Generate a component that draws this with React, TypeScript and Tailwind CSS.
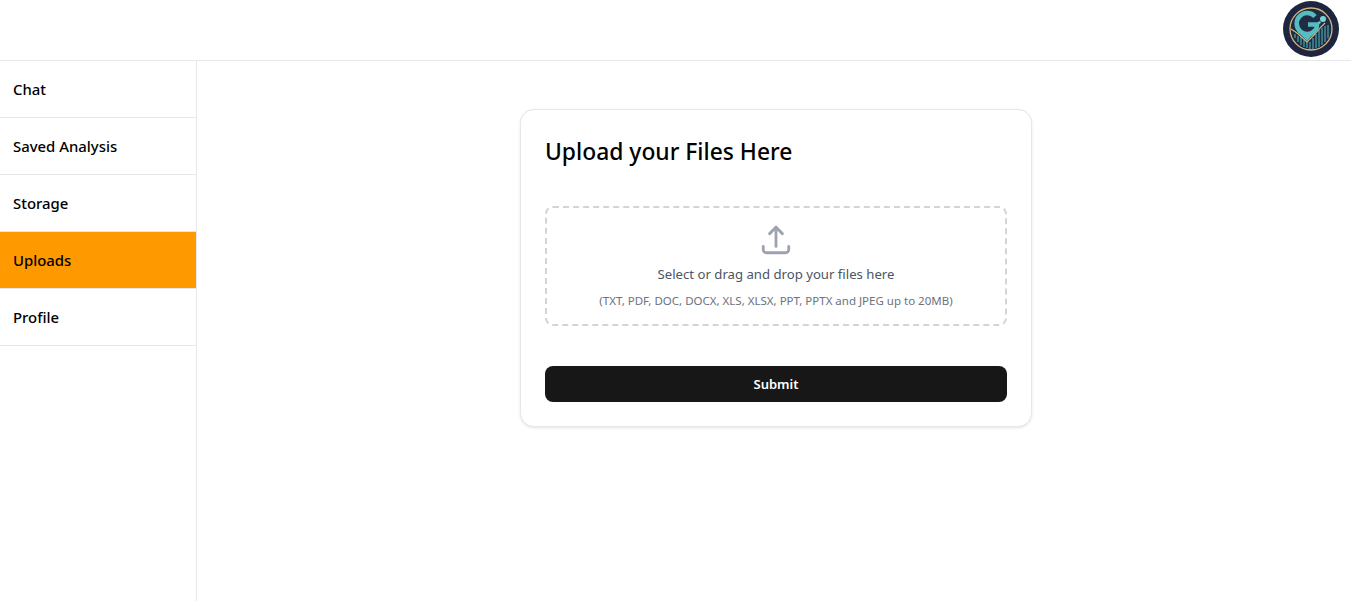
export default function App() {
  const items = ["Chat", "Saved Analysis", "Storage", "Uploads", "Profile"];
  return (
    <div className="h-[601px] bg-white flex flex-col overflow-hidden text-black font-['Noto_Sans',sans-serif]">
      <header className="h-[61px] shrink-0 border-b border-[#e5e7eb] flex items-center justify-end pr-3">
        <svg width="56" height="56" viewBox="0 0 56 56" className="mt-[-3px]">
          <circle cx="28" cy="28" r="28" fill="#1e2540" />
          <circle cx="28" cy="28" r="21" fill="#1f2c44" stroke="#d9b77c" strokeWidth="1.3" />
          <path d="M12 37 V33 M15 41 V35 M18 44 V36 M21 46 V39 M24 47 V41 M27 48 V41 M30 48 V37 M33 47 V33 M36 46 V29 M39 44 V27 M42 41 V25 M45 37 V24" stroke="#3f8f96" strokeWidth="1.5" />
          <path d="M8 28 L14 32 L24 41 L31 34 L38 26 L42 22" fill="none" stroke="#d9b77c" strokeWidth="1.1" />
          <path d="M32 15.5 A10.5 10.5 0 1 0 32.5 29 C33.5 27.5 34 25.5 34 23.5 H25" fill="none" stroke="#56bcc0" strokeWidth="4.6" />
          <path d="M15 31 L24 40 L32 31 Z" fill="#56bcc0" />
          <circle cx="40" cy="18" r="3" fill="#79d3d3" />
          <circle cx="36.5" cy="21.5" r="1.2" fill="#79d3d3" />
        </svg>
      </header>
      <div className="flex flex-1 min-h-0">
        <nav className="w-[197px] shrink-0 border-r border-[#e5e7eb]">
          {items.map((t) => (
            <div
              key={t}
              className={`h-[57px] flex items-center pl-[13px] border-b border-[#e5e7eb] text-[14.9px] font-[550] ${t === "Uploads" ? "bg-[#ff9900]" : ""}`}
            >
              {t}
            </div>
          ))}
        </nav>
        <main className="flex-1 flex justify-center items-start pt-[48px]">
          <div className="w-[512px] h-[318px] ml-[4px] bg-white border border-[#e5e7eb] rounded-[14px] shadow-[0_1px_3px_rgba(0,0,0,0.1)] pt-[24px] px-[24px]">
            <h1 className="text-[22.85px] leading-[36px] font-medium text-black">Upload your Files Here</h1>
            <div className="mt-[36px] h-[120px] border-2 border-dashed border-[#d1d5db] rounded-lg flex flex-col items-center pt-[15px]">
              <svg width="34" height="34" viewBox="0 0 24 24" fill="none" stroke="#9ca3af" strokeWidth="2" strokeLinecap="round" strokeLinejoin="round">
                <path d="M3 16.5v2.25A2.25 2.25 0 0 0 5.25 21h13.5A2.25 2.25 0 0 0 21 18.75V16.5" />
                <path d="M16.5 7.5 12 3 7.5 7.5" />
                <path d="M12 3v13.5" />
              </svg>
              <p className="mt-[5px] text-[13.17px] leading-[24px] text-[#4b5563]">Select or drag and drop your files here</p>
              <p className="mt-[7px] text-[11.5px] leading-[16px] text-[#6b7280]">(TXT, PDF, DOC, DOCX, XLS, XLSX, PPT, PPTX and JPEG up to 20MB)</p>
            </div>
            <button className="mt-[40px] w-full h-[36px] pt-[1px] rounded-lg bg-[#171717] text-white text-[13px] font-semibold">Submit</button>
          </div>
        </main>
      </div>
    </div>
  );
}
